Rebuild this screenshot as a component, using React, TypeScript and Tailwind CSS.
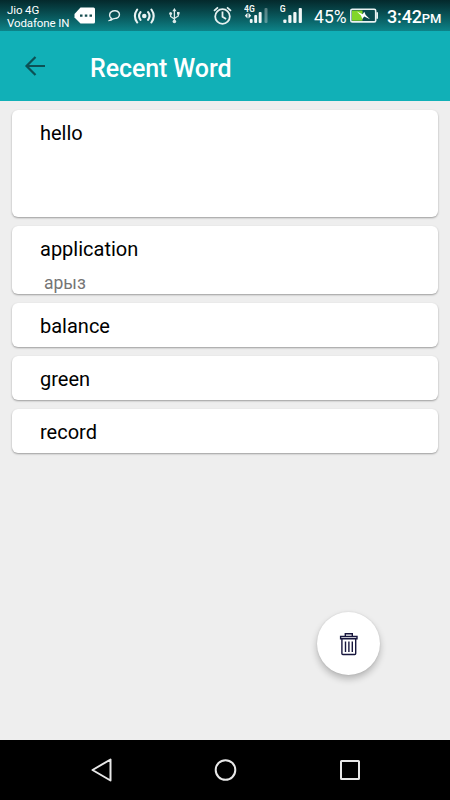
type Word = { term: string; meaning?: string; height: string };

const words: Word[] = [
  { term: 'hello', height: 'h-[107px]' },
  { term: 'application', meaning: 'арыз', height: 'h-[68px]' },
  { term: 'balance', height: 'h-[44px]' },
  { term: 'green', height: 'h-[44px]' },
  { term: 'record', height: 'h-[44px]' },
];

function StatusBar() {
  return (
    <div className="flex h-[31px] w-full shrink-0 items-start overflow-hidden bg-linear-to-b from-[#04292c] to-[#0d8489] text-white">
      <div className="ml-[7px] w-[67px] shrink-0 pt-[4px] text-[11.5px] leading-[13px] tracking-[-0.12px] whitespace-nowrap">
        <div>Jio 4G</div>
        <div>Vodafone IN</div>
      </div>
      <svg className="h-[31px] w-[22px] shrink-0" viewBox="0 0 22 31">
        <path d="M6.500 7.500H19.500Q21 7.500 21 9V22Q21 23.500 19.500 23.500H6.500L.5 17.500V14Z" fill="#fff" />
        <path d="M6 14.500h2.500v2.200H6zM10.800 14.500h2.500v2.200h-2.500zM15.500 14.500H18v2.200h-2.500z" fill="#174e51" />
      </svg>
      <svg className="ml-[12px] h-[31px] w-[14px] shrink-0" viewBox="0 0 14 31" fill="none" stroke="#e6f0f0" strokeWidth="1.400">
        <path d="M3.200 18.200C1.200 17 1 13.500 3.200 11.900C5.500 10.200 9.300 10.400 10.800 12.500C12.200 14.700 11 17.500 8.400 18.200C6.800 18.700 5.200 18.500 4.400 19.100C3.700 19.700 3 20.200 1.900 20.300C3 19.500 3.300 19 3.200 18.200Z" />
      </svg>
      <svg className="ml-[11px] h-[31px] w-[24px] shrink-0" viewBox="0 0 24 31" fill="none" stroke="#e9f2f2" strokeWidth="2.100" strokeLinecap="round">
        <circle cx="11.300" cy="16" r="2.300" fill="#e9f2f2" stroke="none" />
        <path d="M7.500 12.200Q4.600 16 7.500 19.800M4.200 9.500Q-.4 16 4.200 22.500M15.100 12.200Q18 16 15.100 19.800M18.400 9.500Q23 16 18.400 22.500" />
      </svg>
      <svg className="ml-[12px] h-[31px] w-[11px] shrink-0" viewBox="0 0 11 31" fill="none" stroke="#dce9e9" strokeWidth="1.300">
        <path d="M5.400 10V21M1.600 14V16.500L5.400 19M9.300 13.500V16L5.400 18.500" />
        <path d="M5.400 8L7.500 11.300H3.300ZM8 12h2.600v2.600H8z" fill="#dce9e9" stroke="none" />
        <circle cx="1.600" cy="13.400" r="1.500" fill="#dce9e9" stroke="none" />
        <circle cx="5.400" cy="21.500" r="1.800" fill="#dce9e9" stroke="none" />
      </svg>
      <svg className="ml-[33px] h-[31px] w-[20px] shrink-0" viewBox="0 0 20 31" fill="none" stroke="#e6f1f1" strokeWidth="1.800">
        <circle cx="9.500" cy="16.500" r="7.300" />
        <path d="M9.500 11.500V16.700L13.100 19M1 10.900L5 7.300M14 7.300L18 10.900" />
      </svg>
      <svg className="ml-[11px] h-[31px] w-[25px] shrink-0" viewBox="0 0 25 31" fill="#f1f6f6">
        <text x="0" y="12" fontFamily="Roboto, sans-serif" fontSize="8.500" fontWeight="700">4G</text>
        <path d="M.8 15.700L3.500 12.800V18.600ZM7.200 15.700L4.500 12.800V18.600Z" />
        <rect x="5.800" y="19" width="2.800" height="4" rx="1" />
        <rect x="10.200" y="15" width="2.900" height="8" rx="1" />
        <rect x="14.700" y="12" width="2.900" height="11" rx="1" />
        <rect x="20.500" y="8" width="3" height="15" rx="1" opacity=".35" />
      </svg>
      <svg className="ml-[11px] h-[31px] w-[23px] shrink-0" viewBox="0 0 23 31" fill="#f1f6f6">
        <text x="-.3" y="11.500" fontFamily="Roboto, sans-serif" fontSize="8.500" fontWeight="700">G</text>
        <rect x="3.300" y="19.500" width="3.200" height="3.500" rx="1" />
        <rect x="8.300" y="15" width="3.200" height="8" rx="1" />
        <rect x="13.300" y="12" width="3.200" height="11" rx="1" />
        <rect x="18.700" y="8" width="3.200" height="15" rx="1" />
      </svg>
      <div className="ml-[11px] w-[36px] shrink-0 pt-[7px] text-[17.5px] leading-[20px] tracking-[0.1px] whitespace-nowrap">45%</div>
      <svg className="h-[31px] w-[29px] shrink-0" viewBox="0 0 29 31">
        <rect x=".8" y="9.200" width="24.900" height="12.700" rx="1.500" fill="#0a4a4e" stroke="#e9f2f2" strokeWidth="1.600" />
        <path d="M26.300 12.300h1.700v6.500h-1.700z" fill="#e9f2f2" />
        <rect x="2" y="10.500" width="10.500" height="10.200" fill="#82d629" />
        <path d="M6.800 11.500L12.700 14.300L14.300 11.700L15.700 15L20 19.200L14.200 16.600L12.300 19L11 15.600Z" fill="#fff" />
      </svg>
      <div className="ml-[8px] pt-[6px] text-[18px] leading-[21px] font-medium tracking-[-0.15px] whitespace-nowrap">
        3:42<span className="text-[13px]">PM</span>
      </div>
    </div>
  );
}

function WordCard({ term, meaning, height }: Word) {
  return (
    <article className={`${height} shrink-0 overflow-hidden rounded-[6px] bg-white pl-[28px] shadow-[0_1px_2px_rgba(0,0,0,0.35)]`}>
      <h2 className="pt-[11px] text-[20px] leading-[24px] text-black">{term}</h2>
      {meaning && <p className="pt-[12px] pl-[4px] text-[17.5px] leading-[21px] text-[#757575]">{meaning}</p>}
    </article>
  );
}

export default function App() {
  return (
    <div className="relative flex h-[800px] w-[450px] flex-col overflow-hidden bg-[#eeeeee] font-[Roboto,sans-serif]">
      <StatusBar />
      <header className="flex h-[70px] shrink-0 items-center bg-[#11b0b7] text-white">
        <button aria-label="Back" className="ml-[24px] h-[24px] w-[24px]">
          <svg className="h-[24px] w-[24px]" viewBox="0 0 24 24" fill="none" stroke="#0c5155" strokeWidth="2.200">
            <path d="M21 12H3M11.500 3L2.500 12L11.500 21" />
          </svg>
        </button>
        <h1 className="ml-[42px] pt-[5px] text-[25px] leading-[30px] font-medium tracking-[-0.1px]">Recent Word</h1>
      </header>
      <main className="flex flex-1 flex-col gap-[9px] px-[12px] pt-[9px]">
        {words.map((word) => (
          <WordCard key={word.term} {...word} />
        ))}
      </main>
      <button aria-label="Clear words" className="absolute top-[612px] left-[317px] flex h-[63px] w-[63px] items-center justify-center rounded-full bg-white shadow-[0_4px_7px_rgba(0,0,0,0.24),0_0_2px_rgba(0,0,0,0.1)]">
        <svg className="h-[24px] w-[20px]" viewBox="0 0 20 24" fill="none" stroke="#17163d" strokeWidth="1.400">
          <path d="M6.300 4V1.700H13.300V4M1.600 4.500H18V6.700H1.600ZM2.900 7V21.500Q2.900 22.500 3.900 22.500H15.700Q16.700 22.500 16.700 21.500V7M6.500 9.500V20M9.900 9.500V20M13.300 9.500V20" />
        </svg>
      </button>
      <nav className="flex h-[60px] shrink-0 items-center bg-black">
        <svg className="ml-[90px] h-[28px] w-[24px]" viewBox="0 0 24 28" fill="none" stroke="#e8e8e8" strokeWidth="2" strokeLinejoin="round">
          <path d="M2.500 14L20.500 3.500V24.500Z" />
        </svg>
        <svg className="ml-[99px] h-[24px] w-[24px]" viewBox="0 0 24 24" fill="none" stroke="#e8e8e8" strokeWidth="2">
          <circle cx="12.500" cy="12" r="9.800" />
        </svg>
        <svg className="ml-[101px] h-[24px] w-[24px]" viewBox="0 0 24 24" fill="none" stroke="#e8e8e8" strokeWidth="2">
          <rect x="3" y="3" width="18" height="18" rx=".5" />
        </svg>
      </nav>
    </div>
  );
}
